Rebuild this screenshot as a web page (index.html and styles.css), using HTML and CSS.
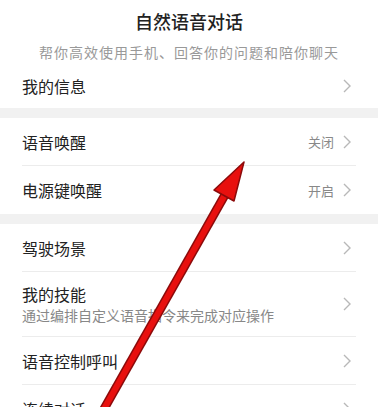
FILE: index.html
```html
<!doctype html>
<html>

<head>
    <meta charset="utf-8" />
    <meta name="viewport" content="width=device-width, initial-scale=1.0">
    <link rel="stylesheet" href="styles.css">
</head>

<body>

    <div class="main">

        <div class="header">
            <div class="title">自然语音对话</div>
            <div class="subtitle">帮你高效使用手机、回答你的问题和陪你聊天</div>
        </div>

        <div class="group">
            <div class="row first">
                <span class="label">我的信息</span>
                <span class="side">
                    <svg class="chevron" width="10" height="14" viewBox="0 0 10 14"><polyline points="2,1 8,7 2,13" /></svg>
                </span>
            </div>
        </div>

        <div class="band"></div>

        <div class="group">
            <div class="row">
                <span class="label">语音唤醒</span>
                <span class="side">
                    <span class="value">关闭</span>
                    <svg class="chevron" width="10" height="14" viewBox="0 0 10 14"><polyline points="2,1 8,7 2,13" /></svg>
                </span>
            </div>
            <div class="row">
                <span class="label">电源键唤醒</span>
                <span class="side">
                    <span class="value">开启</span>
                    <svg class="chevron" width="10" height="14" viewBox="0 0 10 14"><polyline points="2,1 8,7 2,13" /></svg>
                </span>
            </div>
        </div>

        <div class="band"></div>

        <div class="group">
            <div class="row">
                <span class="label">驾驶场景</span>
                <span class="side">
                    <svg class="chevron" width="10" height="14" viewBox="0 0 10 14"><polyline points="2,1 8,7 2,13" /></svg>
                </span>
            </div>
            <div class="row tall">
                <span class="label">
                    我的技能
                    <span class="desc">通过编排自定义语音指令来完成对应操作</span>
                </span>
                <span class="side">
                    <svg class="chevron" width="10" height="14" viewBox="0 0 10 14"><polyline points="2,1 8,7 2,13" /></svg>
                </span>
            </div>
            <div class="row">
                <span class="label">语音控制呼叫</span>
                <span class="side">
                    <svg class="chevron" width="10" height="14" viewBox="0 0 10 14"><polyline points="2,1 8,7 2,13" /></svg>
                </span>
            </div>
            <div class="row">
                <span class="label">连续对话</span>
                <span class="side">
                    <svg class="chevron" width="10" height="14" viewBox="0 0 10 14"><polyline points="2,1 8,7 2,13" /></svg>
                </span>
            </div>
        </div>

        <!-- annotation arrow drawn over the screenshot -->
        <svg class="pointer" viewBox="0 0 378 407" width="378" height="407">
            <line x1="100" y1="416" x2="226" y2="193" stroke="#8c0a0a" stroke-width="9" />
            <line x1="100" y1="416" x2="226" y2="193" stroke="#e8100e" stroke-width="6" />
            <polygon points="244,162 214,190 234,201" fill="#e8100e" stroke="#8c0a0a" stroke-width="1.5" stroke-linejoin="round" />
        </svg>

    </div>

</body>

</html>
```

FILE: styles.css
```css
html,
body {
    margin: 0 0;
    height: 100%;
    font-family: "Noto Sans CJK SC", "Noto Sans", sans-serif;
}

body {
    overflow: hidden;
    background-color: white;
}

.main {
    position: relative;
    width: 378px;
    height: 407px;
    overflow: hidden;
    background-color: white;
}

.main .header {
    height: 64px;
    box-sizing: border-box;
    padding-top: 8px;
    text-align: center;
}

.main .header .title {
    font-size: 18px;
    line-height: 26px;
    font-weight: 500;
    color: #222;
}

.main .header .subtitle {
    margin-top: 8px;
    font-size: 14px;
    line-height: 20px;
    letter-spacing: 1px;
    color: #999;
}

.main .band {
    height: 10px;
    background-color: #f1f1f1;
}

.main .group .row {
    display: flex;
    flex-direction: row;
    justify-content: space-between;
    align-items: center;
    height: 48px;
    box-sizing: border-box;
    margin: 0 22px;
    padding-right: 4px;
    border-bottom: 1px solid #ececec;
}

.main .group .row:last-child {
    border-bottom: none;
}

.main .group .row.first {
    height: 44px;
}

.main .group .row.tall {
    height: 65px;
}

.main .group .row .label {
    display: flex;
    flex-direction: column;
    font-size: 16px;
    line-height: 22px;
    color: #222;
}

.main .group .row .label .desc {
    margin-top: 0;
    font-size: 14px;
    line-height: 20px;
    color: #888;
}

.main .group .row .side {
    display: flex;
    flex-direction: row;
    align-items: center;
}

.main .group .row .side .value {
    margin-right: 8px;
    font-size: 13px;
    color: #888;
}

.main .group .row .side .chevron polyline {
    fill: none;
    stroke: #b8b8b8;
    stroke-width: 1.4;
}

.main .pointer {
    position: absolute;
    top: 0;
    left: 0;
    pointer-events: none;
}
```
